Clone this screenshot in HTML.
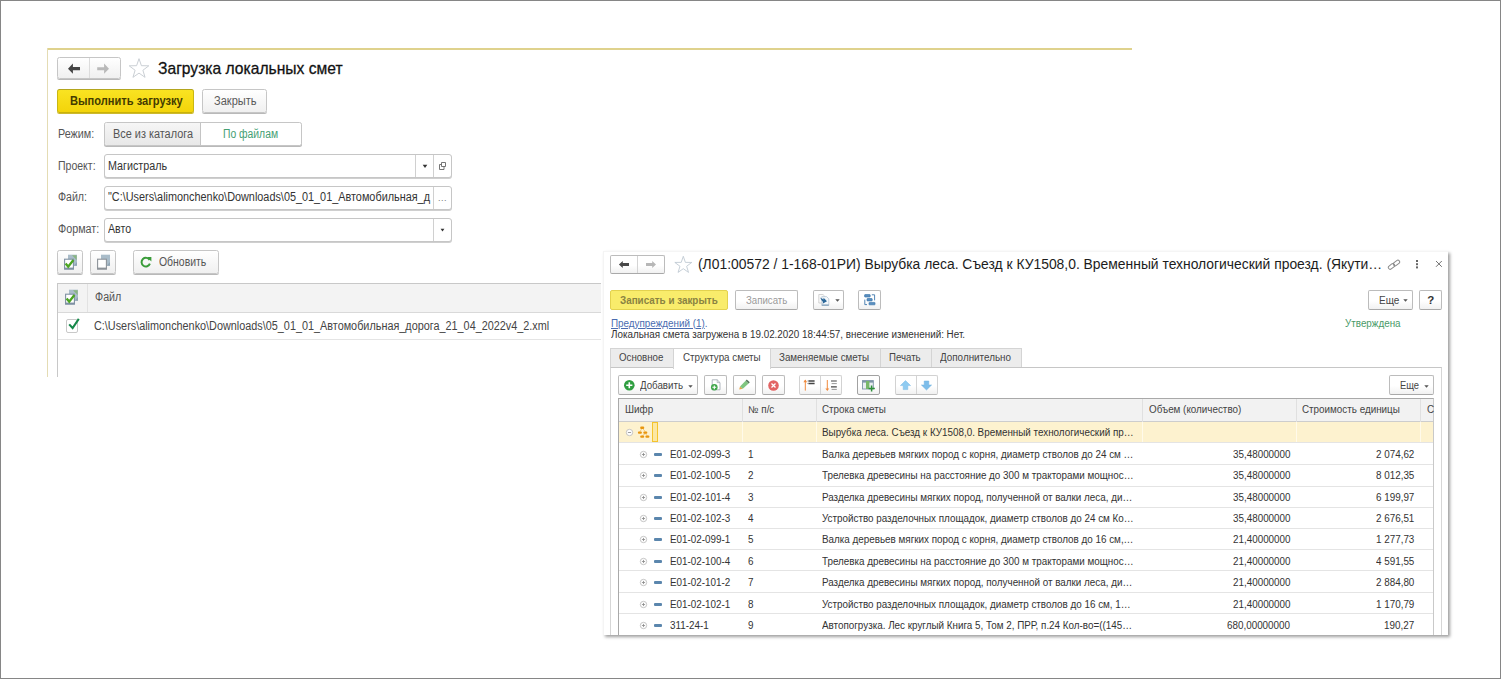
<!DOCTYPE html>
<html lang="ru">
<head>
<meta charset="utf-8">
<title>1C</title>
<style>
*{box-sizing:border-box;margin:0;padding:0}
html,body{width:1501px;height:679px;overflow:hidden;background:#fff}
body{position:relative;font-family:"Liberation Sans",sans-serif;color:#333}
.abs{position:absolute}
#frame{position:absolute;left:0;top:0;width:1501px;height:679px;border:1px solid #868686;pointer-events:none;z-index:50}
/* ---------- left window ---------- */
#lw{position:absolute;left:47px;top:48px;width:1085px;height:329px;border-top:2px solid #dfd28d;background:#fff}
#lwl{position:absolute;left:47px;top:48px;width:1px;height:329px;background:#e4dcb4}
.btn{position:absolute;border:1px solid #c6c6c6;border-radius:2.5px;background:linear-gradient(#fff,#f0f0f0);box-shadow:0 1px 0 #b9b9b9}
.fld{position:absolute;height:24px;border:1px solid #c6c6c6;border-radius:3px;background:#fff;box-shadow:0 1px 0 #cfcfcf}
.dv{position:absolute;width:1px;height:22px;background:#d0d0d0}
/* ---------- right window ---------- */
#rwbg{position:absolute;left:601px;top:244px;width:862px;height:402px;background:#fff}
#rwbox{position:absolute;left:603px;top:251px;width:845px;height:384px;background:#fff;border-left:1px solid #f4f4f4;border-top:1px solid #f5f5f5;box-shadow:2px 2px 3px rgba(0,0,0,.38)}
.rb{position:absolute;height:20px;border:1px solid #bcbcbc;border-bottom-color:#a9a9a9;border-radius:2px;background:linear-gradient(#fff 55%,#f1f1f1)}
.tab{position:absolute;top:348px;height:19px;border:1px solid #d4d4d4;border-bottom:none;background:#ececec}
.tab.on{background:#fff;z-index:3;height:21px}
.hl{position:absolute;left:619px;width:814px;height:1px;background:#e4e4e4}
.vl{position:absolute;top:399px;width:1px;background:#e0e0e0;height:236px}
</style>
</head>
<body>
<!-- LEFT WINDOW -->
<div id="lw"></div>
<div id="lwl"></div>
<div id="left">
<div class="btn" style="left:57px;top:57px;width:64px;height:22px"></div>
<div class="abs" style="left:89px;top:58px;width:1px;height:20px;background:#dcdcdc"></div>
<svg class="abs" style="left:66px;top:62px" width="16" height="14" viewBox="0 0 16 14"><path d="M2 6.7 L6.9 1.6 V5.1 H14 V8.3 H6.9 V11.8 Z" fill="#444"/></svg>
<svg class="abs" style="left:95px;top:62px" width="16" height="14" viewBox="0 0 16 14"><path d="M14 6.7 L9.1 1.6 V5.2 H2.2 V8.2 H9.1 V11.8 Z" fill="#b9b9b9"/></svg>
<svg class="abs" style="left:0;top:0" width="1501" height="679" viewBox="0 0 1501 679"><polygon points="139.00,58.70 141.41,65.68 148.80,65.82 142.90,70.27 145.05,77.33 139.00,73.10 132.95,77.33 135.10,70.27 129.20,65.82 136.59,65.68" fill="#fff" stroke="#c4c9cf" stroke-width="0.9" stroke-linejoin="miter"/></svg>
<div class="abs" style="left:158.3px;top:58.41px;font-size:17px;line-height:22px;color:#111;white-space:nowrap;transform:scaleX(0.9194);transform-origin:0 50%;-webkit-text-stroke:.3px #111;">Загрузка локальных смет</div>
<div class="btn" style="left:57px;top:89px;width:137px;height:24px;border-color:#b3a51e #c9b712 #c9b20a;background:linear-gradient(#f9e322,#f3d40a);box-shadow:0 1px 0 #cdb92e"></div>
<div class="abs" style="left:69.6px;top:93.34px;font-size:12px;line-height:16px;color:#443c00;white-space:nowrap;font-weight:bold;transform:scaleX(0.9258);transform-origin:0 50%;">Выполнить загрузку</div>
<div class="btn" style="left:202px;top:89px;width:65px;height:24px"></div>
<div class="abs" style="left:213.7px;top:93.24px;font-size:12px;line-height:16px;color:#5a5a5a;white-space:nowrap;transform:scaleX(0.9217);transform-origin:0 50%;">Закрыть</div>
<div class="abs" style="left:57.7px;top:125.84px;font-size:12px;line-height:16px;color:#555;white-space:nowrap;transform:scaleX(0.8998);transform-origin:0 50%;">Режим:</div>
<div class="btn" style="left:104px;top:122px;width:198px;height:24px;background:#fff"></div>
<div class="abs" style="left:105px;top:123px;width:96px;height:22px;background:linear-gradient(#f6f6f6,#e8e8e8);border-right:1px solid #c4c4c4;border-radius:2px 0 0 2px"></div>
<div class="abs" style="left:113.0px;top:125.84px;font-size:12px;line-height:16px;color:#555;white-space:nowrap;transform:scaleX(0.9080);transform-origin:0 50%;">Все из каталога</div>
<div class="abs" style="left:223.3px;top:125.84px;font-size:12px;line-height:16px;color:#45a074;white-space:nowrap;transform:scaleX(0.8619);transform-origin:0 50%;">По файлам</div>
<div class="abs" style="left:57.7px;top:157.64px;font-size:12px;line-height:16px;color:#555;white-space:nowrap;transform:scaleX(0.8770);transform-origin:0 50%;">Проект:</div>
<div class="fld" style="left:104px;top:154px;width:348px"><div class="dv" style="left:310px"></div><div class="dv" style="left:328px"></div><svg class="abs" style="left:316.5px;top:8.5px" width="6" height="5" viewBox="0 0 6 5"><path d="M0.7 0.8 H5.3 L3 4 Z" fill="#333"/></svg><svg class="abs" style="left:333px;top:6px" width="9" height="10" viewBox="0 0 9 10"><path d="M3.5 1.5 H7.5 V5.5 H3.5 Z M3.5 3.5 H1.5 V8.5 H6 V5.5" fill="none" stroke="#666" stroke-width=".9"/></svg></div>
<div class="abs" style="left:107.6px;top:157.64px;font-size:12px;line-height:16px;color:#333;white-space:nowrap;transform:scaleX(0.8957);transform-origin:0 50%;">Магистраль</div>
<div class="abs" style="left:58.3px;top:189.44px;font-size:12px;line-height:16px;color:#555;white-space:nowrap;transform:scaleX(0.8830);transform-origin:0 50%;">Файл:</div>
<div class="fld" style="left:104px;top:186px;width:348px"><div class="dv" style="left:328px"></div><div class="abs" style="left:329px;top:0;width:17px;line-height:22px;text-align:center;font-size:9px;color:#777;letter-spacing:.5px">...</div></div>
<div class="abs" style="left:108.0px;top:189.44px;font-size:12px;line-height:16px;color:#333;white-space:nowrap;transform:scaleX(0.9050);transform-origin:0 50%;">"C:\Users\alimonchenko\Downloads\05_01_01_Автомобильная_д</div>
<div class="abs" style="left:58.3px;top:221.44px;font-size:12px;line-height:16px;color:#555;white-space:nowrap;transform:scaleX(0.8984);transform-origin:0 50%;">Формат:</div>
<div class="fld" style="left:104px;top:218px;width:348px"><div class="dv" style="left:328px"></div><svg class="abs" style="left:335.4px;top:9.4px" width="5" height="5" viewBox="0 0 5 5"><path d="M0.6 0.8 H4.4 L2.5 3.6 Z" fill="#333"/></svg></div>
<div class="abs" style="left:107.6px;top:221.44px;font-size:12px;line-height:16px;color:#333;white-space:nowrap;transform:scaleX(0.8832);transform-origin:0 50%;">Авто</div>
<div class="btn" style="left:57px;top:250px;width:26px;height:24px"></div>
<div class="btn" style="left:90px;top:250px;width:26px;height:24px"></div>
<div class="btn" style="left:133px;top:250px;width:86px;height:24px"></div>
<div class="abs" style="left:158.7px;top:254.14px;font-size:12px;line-height:16px;color:#555;white-space:nowrap;transform:scaleX(0.8704);transform-origin:0 50%;">Обновить</div>
<div class="abs" style="left:57px;top:283px;width:560px;height:94px;border-left:1px solid #c8c8c8;border-top:1px solid #c8c8c8"></div>
<div class="abs" style="left:58px;top:284px;width:560px;height:29px;background:#f3f3f3;border-bottom:1px solid #d9d9d9"></div>
<div class="abs" style="left:87px;top:284px;width:1px;height:28px;background:#e2e2e2"></div>
<div class="abs" style="left:94.7px;top:289.44px;font-size:12px;line-height:16px;color:#555;white-space:nowrap;transform:scaleX(0.8911);transform-origin:0 50%;">Файл</div>
<div class="abs" style="left:58px;top:339px;width:560px;height:1px;background:#e4e4e4"></div>
<div class="abs" style="left:94.4px;top:318.24px;font-size:12px;line-height:16px;color:#444;white-space:nowrap;transform:scaleX(0.9036);transform-origin:0 50%;">C:\Users\alimonchenko\Downloads\05_01_01_Автомобильная_дорога_21_04_2022v4_2.xml</div>
<svg class="abs" style="left:63px;top:254px" width="15.0" height="16.0" viewBox="0 0 15 16"><rect x="5" y="0.7" width="9" height="11" fill="#a9bcc9"/><path d="M9 1.2 H13.6 V6 Z" fill="#7fb36a" opacity=".75"/><path d="M10.7 11.7 L14 8 V11.7 Z" fill="#8fa3b3"/><rect x="1.6" y="5.2" width="8.8" height="9.8" fill="#fff" stroke="#7f91a3" stroke-width="1.1"/><rect x="1.1" y="13.6" width="9.8" height="1.9" fill="#7f91a3"/><path d="M2.6 9.6 L5.2 12.6 L10.4 6" fill="none" stroke="#4ba522" stroke-width="2.3"/></svg>
<svg class="abs" style="left:96px;top:254px" width="15.0" height="16.0" viewBox="0 0 15 16"><rect x="5" y="0.7" width="9" height="11" fill="#a9bcc9"/><path d="M10.7 11.7 L14 8 V11.7 Z" fill="#8fa3b3"/><rect x="1.6" y="5.2" width="8.8" height="9.8" fill="#fff" stroke="#8d9399" stroke-width="1.1"/><rect x="1.1" y="13.6" width="9.8" height="1.9" fill="#8d9399"/></svg>
<svg class="abs" style="left:64.3px;top:289px" width="15.0" height="16.0" viewBox="0 0 15 16"><rect x="5" y="0.7" width="9" height="11" fill="#a9bcc9"/><path d="M9 1.2 H13.6 V6 Z" fill="#7fb36a" opacity=".75"/><path d="M10.7 11.7 L14 8 V11.7 Z" fill="#8fa3b3"/><rect x="1.6" y="5.2" width="8.8" height="9.8" fill="#fff" stroke="#7f91a3" stroke-width="1.1"/><rect x="1.1" y="13.6" width="9.8" height="1.9" fill="#7f91a3"/><path d="M2.6 9.6 L5.2 12.6 L10.4 6" fill="none" stroke="#4ba522" stroke-width="2.3"/></svg>
<svg class="abs" style="left:139px;top:255px" width="14" height="14" viewBox="0 0 14 14"><path d="M10.6 5 A4.3 4.3 0 1 0 10.9 8.6" fill="none" stroke="#3a9c3a" stroke-width="2"/><path d="M8 2 H12.4 V6.6 Z" fill="#3a9c3a"/></svg>
<div class="abs" style="left:65.5px;top:319px;width:12.5px;height:13.5px;border:1px solid #c9c9c9;border-radius:2px;background:#fff"></div>
<svg class="abs" style="left:66px;top:316px" width="16" height="16" viewBox="0 0 16 16"><path d="M3.2 8.4 L6.6 12 L12.8 2.8" fill="none" stroke="#16884a" stroke-width="2.1"/></svg>
</div>
<!-- RIGHT WINDOW -->
<div id="rwbg"></div>
<div id="rwbox"></div>
<div id="right">
<div class="rb" style="left:610px;top:255px;width:55px;height:19px"></div>
<div class="abs" style="left:637px;top:256px;width:1px;height:17px;background:#d4d4d4"></div>
<svg class="abs" style="left:617px;top:259px" width="14" height="11" viewBox="0 0 14 11"><path d="M1.9 5.5 L5.8 2 V4 H12 V7 H5.8 V9 Z" fill="#484848"/></svg>
<svg class="abs" style="left:644px;top:259px" width="14" height="11" viewBox="0 0 14 11"><path d="M12 5.5 L8.2 2 V4.1 H2 V6.9 H8.2 V9 Z" fill="#b7b7b7"/></svg>
<svg class="abs" style="left:0;top:0" width="1501" height="679" viewBox="0 0 1501 679"><polygon points="683.30,256.30 685.36,262.37 691.76,262.45 686.63,266.28 688.53,272.40 683.30,268.70 678.07,272.40 679.97,266.28 674.84,262.45 681.24,262.37" fill="#fff" stroke="#bcc6d0" stroke-width="0.85" stroke-linejoin="miter"/></svg>
<div class="abs" style="left:698.3px;top:256.02px;font-size:13.8px;line-height:18px;color:#1c1c1c;white-space:nowrap;transform:scaleX(1.0057);transform-origin:0 50%;">(Л01:00572 / 1-168-01РИ) Вырубка леса. Съезд к КУ1508,0. Временный технологический проезд. (Якути…</div>
<svg class="abs" style="left:1387px;top:258px" width="14" height="14" viewBox="0 0 14 14"><g fill="none" stroke="#8a8a8a" stroke-width="1"><rect x="1" y="6.6" width="7" height="3.6" rx="1.8" transform="rotate(-38 4.5 8.4)"/><rect x="6" y="3.2" width="7" height="3.6" rx="1.8" transform="rotate(-38 9.5 5)"/></g></svg>
<div class="abs" style="left:1416px;top:260px;width:2px;height:2px;background:#666;box-shadow:0 3.2px 0 #666,0 6.4px 0 #666"></div>
<svg class="abs" style="left:1435.2px;top:260.2px" width="8" height="8" viewBox="0 0 8 8"><path d="M1 1 L6.8 6.8 M6.8 1 L1 6.8" stroke="#6a6a6a" stroke-width="0.95"/></svg>
<div class="rb" style="left:610px;top:290px;width:118px;border-color:#e3d24f;background:#f9ec6b"></div>
<div class="abs" style="left:620.3px;top:294.04px;font-size:10px;line-height:13px;color:#8a8342;white-space:nowrap;font-weight:bold;transform:scaleX(0.9858);transform-origin:0 50%;">Записать и закрыть</div>
<div class="rb" style="left:735px;top:290px;width:63px"></div>
<div class="abs" style="left:745.7px;top:294.04px;font-size:10px;line-height:13px;color:#9a9a9a;white-space:nowrap;transform:scaleX(0.9664);transform-origin:0 50%;">Записать</div>
<div class="rb" style="left:813px;top:290px;width:31px"></div>
<div class="rb" style="left:858px;top:290px;width:23px"></div>
<div class="rb" style="left:1368px;top:290px;width:45px"></div>
<div class="abs" style="left:1379.0px;top:293.84px;font-size:10px;line-height:13px;color:#444;white-space:nowrap;">Еще</div>
<svg class="abs" style="left:1403px;top:299px" width="5" height="3" viewBox="0 0 5 3"><path d="M0.3 0.2 H4.7 L2.5 2.7 Z" fill="#555"/></svg>
<div class="rb" style="left:1419px;top:290px;width:23px"></div>
<div class="abs" style="left:1427.2px;top:292.72px;font-size:11.5px;line-height:15px;color:#333;white-space:nowrap;font-weight:bold;">?</div>
<div class="abs" style="left:610.8px;top:316.64px;font-size:10px;line-height:13px;color:#4a6cb0;white-space:nowrap;transform:scaleX(0.9850);transform-origin:0 50%;"><span style="text-decoration:underline">Предупреждений (1)</span>.</div>
<div class="abs" style="left:610.8px;top:327.74px;font-size:10px;line-height:13px;color:#333;white-space:nowrap;transform:scaleX(0.9850);transform-origin:0 50%;">Локальная смета загружена в 19.02.2020 18:44:57, внесение изменений: Нет.</div>
<div class="abs" style="left:1345.0px;top:316.64px;font-size:10px;line-height:13px;color:#4a9a68;white-space:nowrap;transform:scaleX(0.9850);transform-origin:0 50%;">Утверждена</div>
<div class="abs" style="left:610px;top:367px;width:832px;height:268px;border:1px solid #d6d6d6;border-top-color:#c6c6c6;border-bottom:none"></div>
<div class="tab" style="left:610px;width:64px"></div>
<div class="abs" style="left:618.6px;top:351.04px;font-size:10px;line-height:13px;color:#444;white-space:nowrap;transform:scaleX(0.9688);transform-origin:0 50%;z-index:4;">Основное</div>
<div class="tab on" style="left:673px;width:98px"></div>
<div class="abs" style="left:683.0px;top:351.04px;font-size:10px;line-height:13px;color:#444;white-space:nowrap;transform:scaleX(0.9811);transform-origin:0 50%;z-index:4;">Структура сметы</div>
<div class="tab" style="left:770px;width:111px"></div>
<div class="abs" style="left:779.4px;top:351.04px;font-size:10px;line-height:13px;color:#444;white-space:nowrap;transform:scaleX(0.9803);transform-origin:0 50%;z-index:4;">Заменяемые сметы</div>
<div class="tab" style="left:880px;width:52px"></div>
<div class="abs" style="left:889.4px;top:351.04px;font-size:10px;line-height:13px;color:#444;white-space:nowrap;transform:scaleX(0.9644);transform-origin:0 50%;z-index:4;">Печать</div>
<div class="tab" style="left:931px;width:91px"></div>
<div class="abs" style="left:940.0px;top:351.04px;font-size:10px;line-height:13px;color:#444;white-space:nowrap;transform:scaleX(0.9863);transform-origin:0 50%;z-index:4;">Дополнительно</div>
<div class="rb" style="left:618px;top:375px;width:80px;"></div>
<div class="abs" style="left:640.0px;top:379.04px;font-size:10px;line-height:13px;color:#444;white-space:nowrap;transform:scaleX(0.9728);transform-origin:0 50%;">Добавить</div>
<div class="rb" style="left:704px;top:375px;width:23px;"></div>
<div class="rb" style="left:733px;top:375px;width:23px;"></div>
<div class="rb" style="left:762px;top:375px;width:23px;"></div>
<div class="rb" style="left:799px;top:375px;width:43px;border-color:#d2d2d2 #d2d2d2 #bdbdbd"></div>
<div class="abs" style="left:820px;top:376px;width:1px;height:18px;background:#d4d4d4"></div>
<div class="rb" style="left:857px;top:375px;width:23px;border-color:#a2a2a2"></div>
<div class="rb" style="left:894.5px;top:375px;width:43.5px;border-color:#d2d2d2 #d2d2d2 #bdbdbd"></div>
<div class="abs" style="left:916px;top:376px;width:1px;height:18px;background:#d4d4d4"></div>
<div class="rb" style="left:1389px;top:375px;width:44.5px;"></div>
<div class="abs" style="left:1399.6px;top:379.04px;font-size:10px;line-height:13px;color:#444;white-space:nowrap;transform:scaleX(0.9332);transform-origin:0 50%;">Еще</div>
<svg class="abs" style="left:1424px;top:384.5px" width="5" height="3" viewBox="0 0 5 3"><path d="M0.3 0.2 H4.7 L2.5 2.7 Z" fill="#555"/></svg>
<svg class="abs" style="left:688px;top:384.5px" width="5" height="3" viewBox="0 0 5 3"><path d="M0.3 0.2 H4.7 L2.5 2.7 Z" fill="#555"/></svg>
<div class="abs" style="left:618px;top:398px;width:816px;height:237px;border:1px solid #a9a9a9;border-bottom:none;border-right-color:#c9c9c9"></div>
<div class="abs" style="left:619px;top:399px;width:814px;height:23px;background:#f2f2f2;border-bottom:1px solid #cdcdcd"></div>
<div class="abs" style="left:619px;top:422px;width:814px;height:20.5px;background:#fdf2cf"></div>
<div class="vl" style="left:742px;height:23px"></div>
<div class="vl" style="left:742px;top:422px;height:20.5px;background:#fffaea"></div>
<div class="vl" style="left:816px;height:23px"></div>
<div class="vl" style="left:816px;top:422px;height:20.5px;background:#fffaea"></div>
<div class="vl" style="left:1142px;height:23px"></div>
<div class="vl" style="left:1142px;top:422px;height:20.5px;background:#fffaea"></div>
<div class="vl" style="left:1296px;height:23px"></div>
<div class="vl" style="left:1296px;top:422px;height:20.5px;background:#fffaea"></div>
<div class="vl" style="left:1420px;height:23px"></div>
<div class="vl" style="left:1420px;top:422px;height:20.5px;background:#fffaea"></div>
<div class="hl" style="top:442px"></div>
<div class="hl" style="top:464px"></div>
<div class="hl" style="top:486px"></div>
<div class="hl" style="top:507px"></div>
<div class="hl" style="top:528px"></div>
<div class="hl" style="top:549px"></div>
<div class="hl" style="top:570px"></div>
<div class="hl" style="top:592px"></div>
<div class="hl" style="top:613px"></div>
<div class="abs" style="left:624.6px;top:403.04px;font-size:10px;line-height:13px;color:#444;white-space:nowrap;transform:scaleX(0.9850);transform-origin:0 50%;">Шифр</div>
<div class="abs" style="left:748.4px;top:403.04px;font-size:10px;line-height:13px;color:#444;white-space:nowrap;transform:scaleX(0.9850);transform-origin:0 50%;">№ п/с</div>
<div class="abs" style="left:822.4px;top:403.04px;font-size:10px;line-height:13px;color:#444;white-space:nowrap;transform:scaleX(0.9850);transform-origin:0 50%;">Строка сметы</div>
<div class="abs" style="left:1148.8px;top:403.04px;font-size:10px;line-height:13px;color:#444;white-space:nowrap;transform:scaleX(0.9850);transform-origin:0 50%;">Объем (количество)</div>
<div class="abs" style="left:1302.4px;top:403.04px;font-size:10px;line-height:13px;color:#444;white-space:nowrap;transform:scaleX(0.9850);transform-origin:0 50%;">Строимость единицы</div>
<div class="abs" style="left:1427.0px;top:403.04px;font-size:10px;line-height:13px;color:#444;white-space:nowrap;transform:scaleX(0.9850);transform-origin:0 50%;">С</div>
<div class="abs" style="left:822.4px;top:426.34px;font-size:10px;line-height:13px;color:#333;white-space:nowrap;transform:scaleX(0.9850);transform-origin:0 50%;">Вырубка леса. Съезд к КУ1508,0. Временный технологический пр…</div>
<div class="abs" style="left:670.0px;top:447.76px;font-size:10px;line-height:13px;color:#333;white-space:nowrap;transform:scaleX(0.9850);transform-origin:0 50%;">E01-02-099-3</div>
<svg class="abs" style="left:639px;top:449.6px" width="9" height="9" viewBox="0 0 9 9"><circle cx="4.5" cy="4.5" r="3.2" fill="#fff" stroke="#b8b8b8" stroke-width=".8"/><path d="M2.9 4.5 H6.1 M4.5 2.9 V6.1" stroke="#888" stroke-width=".8"/></svg>
<div class="abs" style="left:654px;top:452.6px;width:8px;height:3px;background:#5b86ad;border-radius:1px"></div>
<div class="abs" style="left:748.4px;top:447.76px;font-size:10px;line-height:13px;color:#333;white-space:nowrap;transform:scaleX(0.9850);transform-origin:0 50%;">1</div>
<div class="abs" style="left:822.4px;top:447.76px;font-size:10px;line-height:13px;color:#333;white-space:nowrap;transform:scaleX(0.9850);transform-origin:0 50%;">Валка деревьев мягких пород с корня, диаметр стволов до 24 см …</div>
<div class="abs" style="left:1232.5px;top:447.76px;font-size:10px;line-height:13px;color:#333;white-space:nowrap;transform:scaleX(0.9850);transform-origin:0 50%;">35,48000000</div>
<div class="abs" style="left:1376.0px;top:447.76px;font-size:10px;line-height:13px;color:#333;white-space:nowrap;transform:scaleX(0.9850);transform-origin:0 50%;">2 074,62</div>
<div class="abs" style="left:670.0px;top:469.18px;font-size:10px;line-height:13px;color:#333;white-space:nowrap;transform:scaleX(0.9850);transform-origin:0 50%;">E01-02-100-5</div>
<svg class="abs" style="left:639px;top:471.0px" width="9" height="9" viewBox="0 0 9 9"><circle cx="4.5" cy="4.5" r="3.2" fill="#fff" stroke="#b8b8b8" stroke-width=".8"/><path d="M2.9 4.5 H6.1 M4.5 2.9 V6.1" stroke="#888" stroke-width=".8"/></svg>
<div class="abs" style="left:654px;top:474.0px;width:8px;height:3px;background:#5b86ad;border-radius:1px"></div>
<div class="abs" style="left:748.4px;top:469.18px;font-size:10px;line-height:13px;color:#333;white-space:nowrap;transform:scaleX(0.9850);transform-origin:0 50%;">2</div>
<div class="abs" style="left:822.4px;top:469.18px;font-size:10px;line-height:13px;color:#333;white-space:nowrap;transform:scaleX(0.9850);transform-origin:0 50%;">Трелевка древесины на расстояние до 300 м тракторами мощнос…</div>
<div class="abs" style="left:1232.5px;top:469.18px;font-size:10px;line-height:13px;color:#333;white-space:nowrap;transform:scaleX(0.9850);transform-origin:0 50%;">35,48000000</div>
<div class="abs" style="left:1376.0px;top:469.18px;font-size:10px;line-height:13px;color:#333;white-space:nowrap;transform:scaleX(0.9850);transform-origin:0 50%;">8 012,35</div>
<div class="abs" style="left:670.0px;top:490.60px;font-size:10px;line-height:13px;color:#333;white-space:nowrap;transform:scaleX(0.9850);transform-origin:0 50%;">E01-02-101-4</div>
<svg class="abs" style="left:639px;top:492.5px" width="9" height="9" viewBox="0 0 9 9"><circle cx="4.5" cy="4.5" r="3.2" fill="#fff" stroke="#b8b8b8" stroke-width=".8"/><path d="M2.9 4.5 H6.1 M4.5 2.9 V6.1" stroke="#888" stroke-width=".8"/></svg>
<div class="abs" style="left:654px;top:495.5px;width:8px;height:3px;background:#5b86ad;border-radius:1px"></div>
<div class="abs" style="left:748.4px;top:490.60px;font-size:10px;line-height:13px;color:#333;white-space:nowrap;transform:scaleX(0.9850);transform-origin:0 50%;">3</div>
<div class="abs" style="left:822.4px;top:490.60px;font-size:10px;line-height:13px;color:#333;white-space:nowrap;transform:scaleX(0.9850);transform-origin:0 50%;">Разделка древесины мягких пород, полученной от валки леса, ди…</div>
<div class="abs" style="left:1232.5px;top:490.60px;font-size:10px;line-height:13px;color:#333;white-space:nowrap;transform:scaleX(0.9850);transform-origin:0 50%;">35,48000000</div>
<div class="abs" style="left:1376.0px;top:490.60px;font-size:10px;line-height:13px;color:#333;white-space:nowrap;transform:scaleX(0.9850);transform-origin:0 50%;">6 199,97</div>
<div class="abs" style="left:670.0px;top:512.01px;font-size:10px;line-height:13px;color:#333;white-space:nowrap;transform:scaleX(0.9850);transform-origin:0 50%;">E01-02-102-3</div>
<svg class="abs" style="left:639px;top:513.9px" width="9" height="9" viewBox="0 0 9 9"><circle cx="4.5" cy="4.5" r="3.2" fill="#fff" stroke="#b8b8b8" stroke-width=".8"/><path d="M2.9 4.5 H6.1 M4.5 2.9 V6.1" stroke="#888" stroke-width=".8"/></svg>
<div class="abs" style="left:654px;top:516.9px;width:8px;height:3px;background:#5b86ad;border-radius:1px"></div>
<div class="abs" style="left:748.4px;top:512.01px;font-size:10px;line-height:13px;color:#333;white-space:nowrap;transform:scaleX(0.9850);transform-origin:0 50%;">4</div>
<div class="abs" style="left:822.4px;top:512.01px;font-size:10px;line-height:13px;color:#333;white-space:nowrap;transform:scaleX(0.9850);transform-origin:0 50%;">Устройство разделочных площадок, диаметр стволов до 24 см Ко…</div>
<div class="abs" style="left:1232.5px;top:512.01px;font-size:10px;line-height:13px;color:#333;white-space:nowrap;transform:scaleX(0.9850);transform-origin:0 50%;">35,48000000</div>
<div class="abs" style="left:1376.0px;top:512.01px;font-size:10px;line-height:13px;color:#333;white-space:nowrap;transform:scaleX(0.9850);transform-origin:0 50%;">2 676,51</div>
<div class="abs" style="left:670.0px;top:533.43px;font-size:10px;line-height:13px;color:#333;white-space:nowrap;transform:scaleX(0.9850);transform-origin:0 50%;">E01-02-099-1</div>
<svg class="abs" style="left:639px;top:535.3px" width="9" height="9" viewBox="0 0 9 9"><circle cx="4.5" cy="4.5" r="3.2" fill="#fff" stroke="#b8b8b8" stroke-width=".8"/><path d="M2.9 4.5 H6.1 M4.5 2.9 V6.1" stroke="#888" stroke-width=".8"/></svg>
<div class="abs" style="left:654px;top:538.3px;width:8px;height:3px;background:#5b86ad;border-radius:1px"></div>
<div class="abs" style="left:748.4px;top:533.43px;font-size:10px;line-height:13px;color:#333;white-space:nowrap;transform:scaleX(0.9850);transform-origin:0 50%;">5</div>
<div class="abs" style="left:822.4px;top:533.43px;font-size:10px;line-height:13px;color:#333;white-space:nowrap;transform:scaleX(0.9850);transform-origin:0 50%;">Валка деревьев мягких пород с корня, диаметр стволов до 16 см,…</div>
<div class="abs" style="left:1232.5px;top:533.43px;font-size:10px;line-height:13px;color:#333;white-space:nowrap;transform:scaleX(0.9850);transform-origin:0 50%;">21,40000000</div>
<div class="abs" style="left:1376.0px;top:533.43px;font-size:10px;line-height:13px;color:#333;white-space:nowrap;transform:scaleX(0.9850);transform-origin:0 50%;">1 277,73</div>
<div class="abs" style="left:670.0px;top:554.86px;font-size:10px;line-height:13px;color:#333;white-space:nowrap;transform:scaleX(0.9850);transform-origin:0 50%;">E01-02-100-4</div>
<svg class="abs" style="left:639px;top:556.7px" width="9" height="9" viewBox="0 0 9 9"><circle cx="4.5" cy="4.5" r="3.2" fill="#fff" stroke="#b8b8b8" stroke-width=".8"/><path d="M2.9 4.5 H6.1 M4.5 2.9 V6.1" stroke="#888" stroke-width=".8"/></svg>
<div class="abs" style="left:654px;top:559.7px;width:8px;height:3px;background:#5b86ad;border-radius:1px"></div>
<div class="abs" style="left:748.4px;top:554.86px;font-size:10px;line-height:13px;color:#333;white-space:nowrap;transform:scaleX(0.9850);transform-origin:0 50%;">6</div>
<div class="abs" style="left:822.4px;top:554.86px;font-size:10px;line-height:13px;color:#333;white-space:nowrap;transform:scaleX(0.9850);transform-origin:0 50%;">Трелевка древесины на расстояние до 300 м тракторами мощнос…</div>
<div class="abs" style="left:1232.5px;top:554.86px;font-size:10px;line-height:13px;color:#333;white-space:nowrap;transform:scaleX(0.9850);transform-origin:0 50%;">21,40000000</div>
<div class="abs" style="left:1376.0px;top:554.86px;font-size:10px;line-height:13px;color:#333;white-space:nowrap;transform:scaleX(0.9850);transform-origin:0 50%;">4 591,55</div>
<div class="abs" style="left:670.0px;top:576.27px;font-size:10px;line-height:13px;color:#333;white-space:nowrap;transform:scaleX(0.9850);transform-origin:0 50%;">E01-02-101-2</div>
<svg class="abs" style="left:639px;top:578.1px" width="9" height="9" viewBox="0 0 9 9"><circle cx="4.5" cy="4.5" r="3.2" fill="#fff" stroke="#b8b8b8" stroke-width=".8"/><path d="M2.9 4.5 H6.1 M4.5 2.9 V6.1" stroke="#888" stroke-width=".8"/></svg>
<div class="abs" style="left:654px;top:581.1px;width:8px;height:3px;background:#5b86ad;border-radius:1px"></div>
<div class="abs" style="left:748.4px;top:576.27px;font-size:10px;line-height:13px;color:#333;white-space:nowrap;transform:scaleX(0.9850);transform-origin:0 50%;">7</div>
<div class="abs" style="left:822.4px;top:576.27px;font-size:10px;line-height:13px;color:#333;white-space:nowrap;transform:scaleX(0.9850);transform-origin:0 50%;">Разделка древесины мягких пород, полученной от валки леса, ди…</div>
<div class="abs" style="left:1232.5px;top:576.27px;font-size:10px;line-height:13px;color:#333;white-space:nowrap;transform:scaleX(0.9850);transform-origin:0 50%;">21,40000000</div>
<div class="abs" style="left:1376.0px;top:576.27px;font-size:10px;line-height:13px;color:#333;white-space:nowrap;transform:scaleX(0.9850);transform-origin:0 50%;">2 884,80</div>
<div class="abs" style="left:670.0px;top:597.70px;font-size:10px;line-height:13px;color:#333;white-space:nowrap;transform:scaleX(0.9850);transform-origin:0 50%;">E01-02-102-1</div>
<svg class="abs" style="left:639px;top:599.6px" width="9" height="9" viewBox="0 0 9 9"><circle cx="4.5" cy="4.5" r="3.2" fill="#fff" stroke="#b8b8b8" stroke-width=".8"/><path d="M2.9 4.5 H6.1 M4.5 2.9 V6.1" stroke="#888" stroke-width=".8"/></svg>
<div class="abs" style="left:654px;top:602.6px;width:8px;height:3px;background:#5b86ad;border-radius:1px"></div>
<div class="abs" style="left:748.4px;top:597.70px;font-size:10px;line-height:13px;color:#333;white-space:nowrap;transform:scaleX(0.9850);transform-origin:0 50%;">8</div>
<div class="abs" style="left:822.4px;top:597.70px;font-size:10px;line-height:13px;color:#333;white-space:nowrap;transform:scaleX(0.9850);transform-origin:0 50%;">Устройство разделочных площадок, диаметр стволов до 16 см, 1…</div>
<div class="abs" style="left:1232.5px;top:597.70px;font-size:10px;line-height:13px;color:#333;white-space:nowrap;transform:scaleX(0.9850);transform-origin:0 50%;">21,40000000</div>
<div class="abs" style="left:1376.0px;top:597.70px;font-size:10px;line-height:13px;color:#333;white-space:nowrap;transform:scaleX(0.9850);transform-origin:0 50%;">1 170,79</div>
<div class="abs" style="left:670.0px;top:619.12px;font-size:10px;line-height:13px;color:#333;white-space:nowrap;transform:scaleX(0.9850);transform-origin:0 50%;">311-24-1</div>
<svg class="abs" style="left:639px;top:621.0px" width="9" height="9" viewBox="0 0 9 9"><circle cx="4.5" cy="4.5" r="3.2" fill="#fff" stroke="#b8b8b8" stroke-width=".8"/><path d="M2.9 4.5 H6.1 M4.5 2.9 V6.1" stroke="#888" stroke-width=".8"/></svg>
<div class="abs" style="left:654px;top:624.0px;width:8px;height:3px;background:#5b86ad;border-radius:1px"></div>
<div class="abs" style="left:748.4px;top:619.12px;font-size:10px;line-height:13px;color:#333;white-space:nowrap;transform:scaleX(0.9850);transform-origin:0 50%;">9</div>
<div class="abs" style="left:822.4px;top:619.12px;font-size:10px;line-height:13px;color:#333;white-space:nowrap;transform:scaleX(0.9850);transform-origin:0 50%;">Автопогрузка. Лес круглый Книга 5, Том 2, ПРР, п.24 Кол-во=((145…</div>
<div class="abs" style="left:1227.0px;top:619.12px;font-size:10px;line-height:13px;color:#333;white-space:nowrap;transform:scaleX(0.9850);transform-origin:0 50%;">680,00000000</div>
<div class="abs" style="left:1384.3px;top:619.12px;font-size:10px;line-height:13px;color:#333;white-space:nowrap;transform:scaleX(0.9850);transform-origin:0 50%;">190,27</div>
<svg class="abs" style="left:625px;top:428px" width="9" height="9" viewBox="0 0 9 9"><circle cx="4.5" cy="4.5" r="3.2" fill="#fff" stroke="#b8b8b8" stroke-width=".8"/><path d="M2.9 4.5 H6.1" stroke="#888" stroke-width=".8"/></svg>
<svg class="abs" style="left:636px;top:425px" width="15" height="14" viewBox="0 0 15 14"><path d="M6.2 3 L4 6.6 M6.2 3 L9.3 6.6 M9.3 8.6 L6.2 10.8 M9.3 8.6 L11.4 10.8" stroke="#f0c06a" stroke-width=".8" fill="none"/><g fill="#e8960e"><rect x="4.2" y="1.6" width="4" height="2.3" rx="1"/><rect x="1.9" y="6.4" width="4" height="2.3" rx="1"/><rect x="7.3" y="6.4" width="4" height="2.3" rx="1"/><rect x="4.2" y="10.5" width="4" height="2.3" rx="1"/><rect x="9.4" y="10.5" width="4" height="2.3" rx="1"/></g></svg>
<div class="abs" style="left:652px;top:422.4px;width:6.2px;height:19.8px;border:1.4px solid #f5c42c;background:#fbe7a4"></div>
<svg class="abs" style="left:818px;top:294px" width="12" height="12" viewBox="0 0 12 12"><path d="M0.8 0.5 H5 L6.6 2 V9 H0.8 Z" fill="#fbfbfb" stroke="#c9c9c9" stroke-width=".8"/><path d="M3.8 2.6 H8.6 L10.8 4.8 V11.4 H3.8 Z" fill="#f4f8fb" stroke="#b9c7d3" stroke-width=".8"/><path d="M2.2 3.6 L5.4 5.4 L5.6 3.8 L9 7.2 L4.6 9.8 L5 8 Q3.4 7 2.2 3.6 Z" fill="#2b6799"/><rect x="3.8" y="10.6" width="7" height=".9" fill="#5c86a8"/></svg>
<svg class="abs" style="left:834.5px;top:299px" width="5" height="3" viewBox="0 0 5 3"><path d="M0.3 0.2 H4.7 L2.5 2.7 Z" fill="#555"/></svg>
<svg class="abs" style="left:863.5px;top:294px" width="12" height="12" viewBox="0 0 12 12"><g fill="#5a8fc0" stroke="#3f78ad" stroke-width=".7"><rect x="0.6" y="0.6" width="5.6" height="2.4" rx=".5"/><rect x="3" y="4.5" width="5.2" height="2.4" rx=".5"/><rect x="5" y="8.4" width="6" height="2.4" rx=".5"/></g><path d="M0.8 5.6 V10.6 H3 M7.8 0.8 H10.6 V6.4" fill="none" stroke="#3f78ad" stroke-width=".9"/></svg>
<svg class="abs" style="left:622.5px;top:378.7px" width="12.6" height="12.6" viewBox="-6.3 -6.3 12.6 12.6"><circle r="5.3" fill="#2f9e40"/><path d="M-3.074 0 H3.074 M0 -3.074 V3.074" stroke="#fff" stroke-width="1.59"/></svg>
<svg class="abs" style="left:710px;top:378.5px" width="12" height="12" viewBox="0 0 12 12"><path d="M2.2 0.8 H7.2 L10 3.6 V10.8 H2.2 Z" fill="#fff" stroke="#a8b0b8" stroke-width=".9"/><path d="M7.2 0.8 V3.6 H10" fill="none" stroke="#a8b0b8" stroke-width=".8"/></svg>
<svg class="abs" style="left:709.5px;top:382.9px" width="8.6" height="8.6" viewBox="-4.3 -4.3 8.6 8.6"><circle r="3.3" fill="#3fa64a"/><path d="M-1.9139999999999997 0 H1.9139999999999997 M0 -1.9139999999999997 V1.9139999999999997" stroke="#fff" stroke-width="1.10"/></svg>
<svg class="abs" style="left:738px;top:379px" width="13" height="12" viewBox="0 0 13 12"><path d="M1.2 10.6 L2 7.4 L4.8 9.8 Z" fill="#e8a54a"/><path d="M2 7.4 L7.6 1.8 L10.6 4.4 L4.8 9.8 Z" fill="#80c680"/><path d="M7.6 1.8 L8.8 0.6 L11.8 3.2 L10.6 4.4 Z" fill="#587a5e"/></svg>
<svg class="abs" style="left:767px;top:378.5px" width="13" height="13" viewBox="-6.5 -6.5 13 13"><circle r="5.3" fill="#e26464"/><path d="M-2 -2 L2 2 M2 -2 L-2 2" stroke="#fff" stroke-width="1.25"/></svg>
<svg class="abs" style="left:802px;top:378.5px" width="16" height="13" viewBox="0 0 16 13"><path d="M3.3 1 V11.6" stroke="#f08a3c" stroke-width="1"/><path d="M1.4 3.2 L3.3 0.6 L5.2 3.2 Z" fill="#f08a3c"/><path d="M6.4 2 H12.6 M6.4 4.5 H12.6" stroke="#444" stroke-width="1.3"/><path d="M5.4 2 H6 M5.4 4.5 H6" stroke="#888" stroke-width=".8"/></svg>
<svg class="abs" style="left:824px;top:378.5px" width="16" height="13" viewBox="0 0 16 13"><path d="M3.3 1 V11" stroke="#f08a3c" stroke-width="1"/><path d="M1.4 9.4 L3.3 12 L5.2 9.4 Z" fill="#f08a3c"/><path d="M7 2 H12.8 M7 7.8 H12.8" stroke="#444" stroke-width="1.2"/><path d="M7.6 4.6 H12.8 M7.6 10.4 H12.8" stroke="#999" stroke-width="1"/></svg>
<svg class="abs" style="left:861.5px;top:379.5px" width="14" height="12" viewBox="0 0 14 12"><rect x="0.5" y="0.6" width="10.8" height="8.4" fill="#e9eef2" stroke="#7f95a8" stroke-width=".9"/><rect x="0.5" y="0.6" width="10.8" height="2" fill="#7f95a8"/><rect x="4" y="1" width="3.4" height="8" fill="#78b86a"/><path d="M9.6 5.4 V11.6 M6.6 8.5 H12.8" stroke="#2e8f3a" stroke-width="1.5"/></svg>
<svg class="abs" style="left:899.5px;top:379.5px" width="11" height="11" viewBox="0 0 11 11"><path d="M5.5 0.6 L10.6 5.6 H7.8 V9.6 H3.2 V5.6 H0.4 Z" fill="#8fcbf1" stroke="#7bbbe6" stroke-width=".5"/></svg>
<svg class="abs" style="left:921.2px;top:380px" width="11" height="11" viewBox="0 0 11 11"><path d="M5.5 10 L10.6 5 H7.8 V1 H3.2 V5 H0.4 Z" fill="#7dbdea" stroke="#6fb0df" stroke-width=".5"/></svg>
</div>
<div id="frame"></div>
</body>
</html>
